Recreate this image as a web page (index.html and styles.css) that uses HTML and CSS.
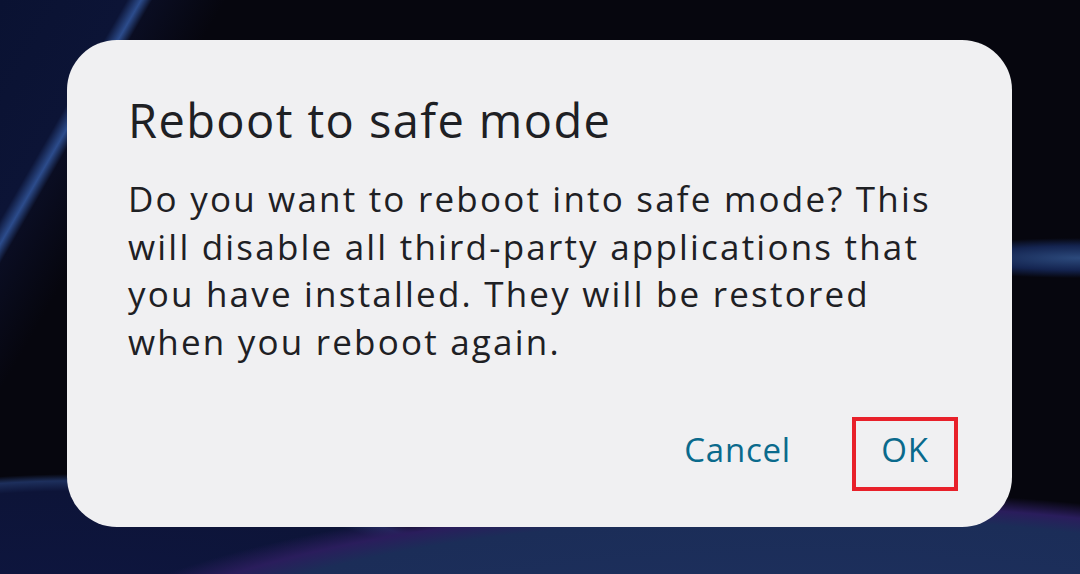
FILE: index.html
```html
<!DOCTYPE html>
<html lang="en">
<head>
    <meta charset="UTF-8">
    <meta name="viewport" content="width=device-width, initial-scale=1.0">
    <title>Reboot to safe mode</title>
    <link rel="stylesheet" href="styles.css">
</head>
<body>

<div class="wallpaper">
    <div class="dialog">
        <h1 class="dialog-title">Reboot to safe mode</h1>
        <p class="dialog-text">
            Do you want to reboot into safe mode? This<br>
            will disable all third-party applications that<br>
            you have installed. They will be restored<br>
            when you reboot again.
        </p>
        <div class="dialog-actions">
            <button class="action-btn">Cancel</button>
            <button class="action-btn highlighted">OK</button>
        </div>
    </div>
</div>

</body>
</html>
```

FILE: styles.css
```css
body {
    margin: 0;
    font-family: 'Open Sans', 'Noto Sans', sans-serif;
    background-color: #06060e;
}

.wallpaper {
    width: 1080px;
    height: 574px;
    overflow: hidden;
    padding-top: 40px;
    box-sizing: border-box;
    background:
        /* wave at the bottom */
        radial-gradient(ellipse 780px 200px at 800px 690px, #1f3262 0%, #1b2d58 86%, #2a1d5c 93%, rgba(20,10,40,0) 100%),
        /* streak on the right edge */
        radial-gradient(ellipse 170px 20px at 1080px 258px, #2c4a7c 0%, #142450 60%, rgba(6,6,14,0) 100%),
        /* curve on the lower left */
        radial-gradient(ellipse 520px 170px at 80px 610px, #0e1640 0%, #0d1438 70%, #1d2f5c 76%, rgba(6,6,14,0) 80%),
        /* navy corner with highlight line */
        linear-gradient(120deg, #0a1232 0%, #0c1436 9%, #2c4c8c 10%, #0a0d22 10.8%, #06060e 16%, #06060e 100%);
}

.dialog {
    width: 945px;
    height: 487px;
    margin-left: 67px;
    box-sizing: border-box;
    padding: 52px 54px 0 61px;
    background-color: #f0f0f2;
    border-radius: 50px;
    display: flex;
    flex-direction: column;
}

.dialog-title {
    margin: 0;
    font-size: 47px;
    font-weight: 400;
    line-height: 56px;
    letter-spacing: 1.4px;
    color: #1e2024;
}

.dialog-text {
    margin: 27px 0 0 0;
    font-size: 35px;
    line-height: 47.5px;
    letter-spacing: 2.2px;
    color: #1e2024;
    white-space: nowrap;
}

.dialog-actions {
    display: flex;
    justify-content: flex-end;
    align-items: baseline;
    margin-top: auto;
    margin-bottom: 36px;
    gap: 61px;
}

.action-btn {
    background: none;
    border: none;
    padding: 0;
    font-family: inherit;
    font-size: 33px;
    letter-spacing: 0.8px;
    color: #0a6a8c;
    cursor: pointer;
}

.action-btn.highlighted {
    width: 106px;
    height: 74px;
    padding-bottom: 10px;
    border: 4px solid #e8202a;
}
```
